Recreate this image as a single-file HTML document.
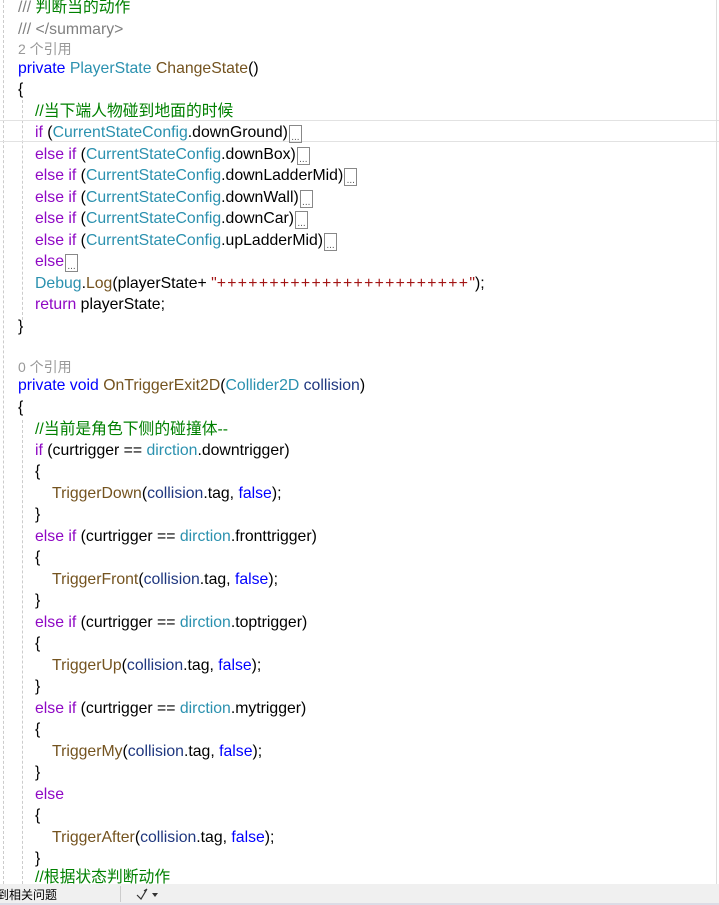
<!DOCTYPE html>
<html><head><meta charset="utf-8"><style>
html,body{margin:0;padding:0;width:719px;height:905px;overflow:hidden;background:#fff;}
body{position:relative;font-family:"Liberation Sans","Noto Sans CJK SC",sans-serif;font-size:15.8px;color:#000;}
.l{position:absolute;white-space:pre;line-height:20px;height:20px;margin-top:2px}
.k{color:#0000ff}.c{color:#8f08c4}.t{color:#2b91af}.m{color:#74531f}.g{color:#008000}.s{color:#a31515}.v{color:#1f377f}.gr{color:#808080}.r{color:#999;font-size:14px}
.p{letter-spacing:1.3px}
.b{display:inline-block;border:1px solid #888;width:11px;height:16px;vertical-align:-3px;font-size:10px;line-height:24px;color:#555;text-align:center;margin-left:1px}
.guide{position:absolute;top:0;width:0;border-left:1px dashed #ccc;}
</style></head><body>
<div class="guide" style="left:3px;height:884px"></div>
<div class="guide" style="left:22px;top:100px;height:220px"></div>
<div class="guide" style="left:22px;top:420px;height:464px"></div>
<div style="position:absolute;left:0;top:120px;width:719px;height:20px;border-top:1px solid #e2e2e2;border-bottom:1px solid #e2e2e2"></div>
<div style="position:absolute;left:716px;top:0;height:884px;border-left:1px solid #ddd"></div>

<div class="l g" style="left:18px;top:-4px"><span class="gr">///</span> 判断当的动作</div>
<div class="l gr" style="left:18px;top:18px">/// &lt;/summary&gt;</div>
<div class="l r" style="left:18px;top:37px">2 个引用</div>
<div class="l" style="left:18px;top:57px"><span class="k">private</span> <span class="t">PlayerState</span> <span class="m">ChangeState</span>()</div>
<div class="l" style="left:18px;top:78px">{</div>
<div class="l g" style="left:35px;top:100px">//当下端人物碰到地面的时候</div>
<div class="l" style="left:35px;top:121px"><span class="c">if</span> (<span class="t">CurrentStateConfig</span>.downGround)<span class="b">...</span></div>
<div class="l" style="left:35px;top:143px"><span class="c">else if</span> (<span class="t">CurrentStateConfig</span>.downBox)<span class="b">...</span></div>
<div class="l" style="left:35px;top:164px"><span class="c">else if</span> (<span class="t">CurrentStateConfig</span>.downLadderMid)<span class="b">...</span></div>
<div class="l" style="left:35px;top:186px"><span class="c">else if</span> (<span class="t">CurrentStateConfig</span>.downWall)<span class="b">...</span></div>
<div class="l" style="left:35px;top:207px"><span class="c">else if</span> (<span class="t">CurrentStateConfig</span>.downCar)<span class="b">...</span></div>
<div class="l" style="left:35px;top:229px"><span class="c">else if</span> (<span class="t">CurrentStateConfig</span>.upLadderMid)<span class="b">...</span></div>
<div class="l" style="left:35px;top:250px"><span class="c">else</span><span class="b">...</span></div>
<div class="l" style="left:35px;top:272px"><span class="t">Debug</span>.<span class="m">Log</span>(playerState+ <span class="s">"<span class="p">++++++++++++++++++++++++</span>"</span>);</div>
<div class="l" style="left:35px;top:293px"><span class="c">return</span> playerState;</div>
<div class="l" style="left:18px;top:315px">}</div>

<div class="l r" style="left:18px;top:355px">0 个引用</div>
<div class="l" style="left:18px;top:374px"><span class="k">private void</span> <span class="m">OnTriggerExit2D</span>(<span class="t">Collider2D</span> <span class="v">collision</span>)</div>
<div class="l" style="left:18px;top:396px">{</div>
<div class="l g" style="left:35px;top:418px">//当前是角色下侧的碰撞体--</div>
<div class="l" style="left:35px;top:439px"><span class="c">if</span> (curtrigger == <span class="t">dirction</span>.downtrigger)</div>
<div class="l" style="left:35px;top:460px">{</div>
<div class="l" style="left:52px;top:482px"><span class="m">TriggerDown</span>(<span class="v">collision</span>.tag, <span class="k">false</span>);</div>
<div class="l" style="left:35px;top:503px">}</div>
<div class="l" style="left:35px;top:525px"><span class="c">else if</span> (curtrigger == <span class="t">dirction</span>.fronttrigger)</div>
<div class="l" style="left:35px;top:546px">{</div>
<div class="l" style="left:52px;top:568px"><span class="m">TriggerFront</span>(<span class="v">collision</span>.tag, <span class="k">false</span>);</div>
<div class="l" style="left:35px;top:589px">}</div>
<div class="l" style="left:35px;top:611px"><span class="c">else if</span> (curtrigger == <span class="t">dirction</span>.toptrigger)</div>
<div class="l" style="left:35px;top:632px">{</div>
<div class="l" style="left:52px;top:654px"><span class="m">TriggerUp</span>(<span class="v">collision</span>.tag, <span class="k">false</span>);</div>
<div class="l" style="left:35px;top:675px">}</div>
<div class="l" style="left:35px;top:697px"><span class="c">else if</span> (curtrigger == <span class="t">dirction</span>.mytrigger)</div>
<div class="l" style="left:35px;top:718px">{</div>
<div class="l" style="left:52px;top:740px"><span class="m">TriggerMy</span>(<span class="v">collision</span>.tag, <span class="k">false</span>);</div>
<div class="l" style="left:35px;top:761px">}</div>
<div class="l" style="left:35px;top:783px"><span class="c">else</span></div>
<div class="l" style="left:35px;top:804px">{</div>
<div class="l" style="left:52px;top:826px"><span class="m">TriggerAfter</span>(<span class="v">collision</span>.tag, <span class="k">false</span>);</div>
<div class="l" style="left:35px;top:847px">}</div>
<div class="l g" style="left:35px;top:866px">//根据状态判断动作</div>

<div style="position:absolute;left:0;top:884px;width:719px;height:21px;background:#f0f0f0;border-bottom:2px solid #dcdce6;box-sizing:border-box;font-size:12px">
<span style="position:absolute;left:-3px;top:2px">到相关问题</span>
<div style="position:absolute;left:120px;top:2px;height:16px;border-left:1px solid #ccc"></div>
<svg style="position:absolute;left:135px;top:3px" width="26" height="14"><path d="M2 8 L6 12 L12 2 M9 4 L12 2" stroke="#333" fill="none" stroke-width="1.2"/><path d="M17 6 L23 6 L20 10Z" fill="#333"/></svg>
</div>
</body></html>
